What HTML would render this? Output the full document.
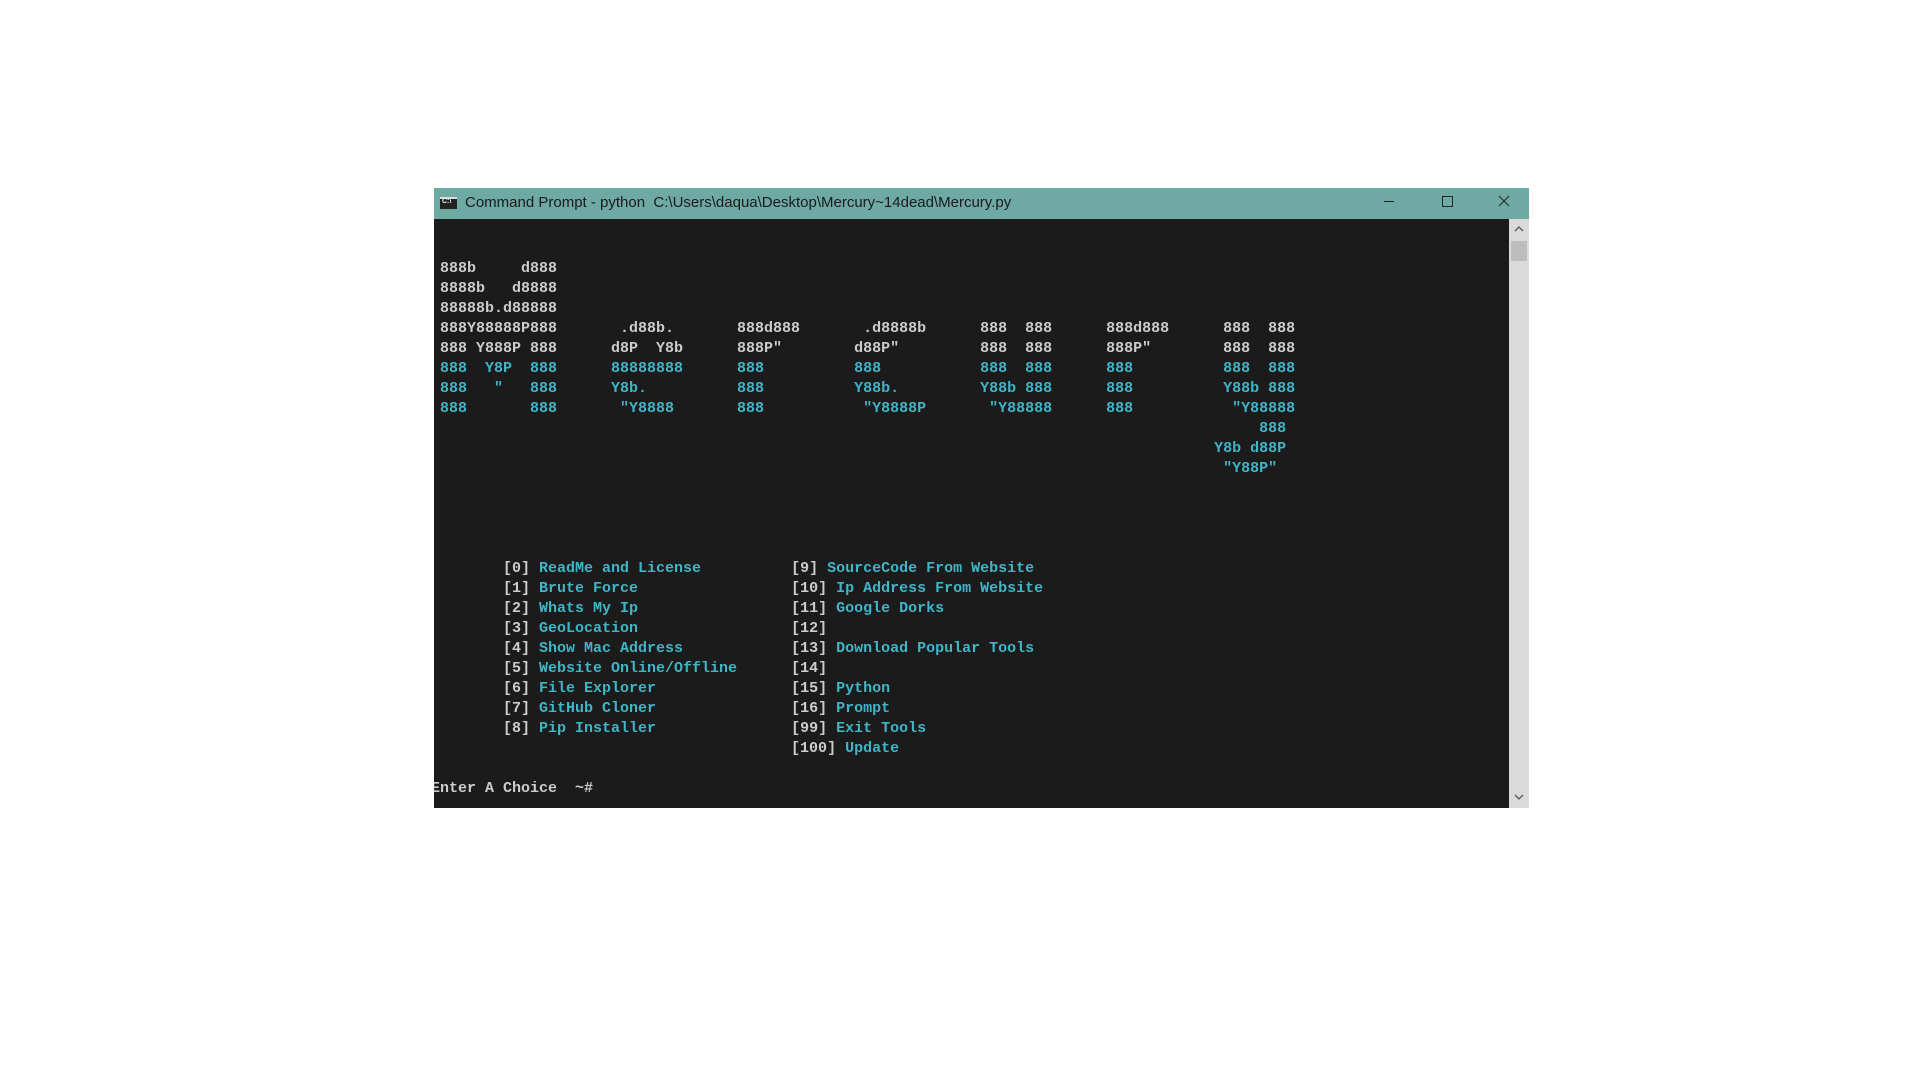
<!DOCTYPE html>
<html><head><meta charset="utf-8"><style>
body{margin:0;width:1920px;height:1080px;background:#fff;position:relative;overflow:hidden}
#win{position:absolute;left:434px;top:188px;width:1095px;height:620px;overflow:hidden;background:#1b1b1b}
#tb{position:absolute;left:0;top:0;width:1095px;height:31px;background:#6fa9a4;font:15px "Liberation Sans",sans-serif;color:#1a1a1a}
#tb .t{position:absolute;left:31px;top:6px;white-space:pre}
#ico{position:absolute;left:6px;top:9px;width:17px;height:12px;background:#222;border-top:2px solid #ddd;box-sizing:border-box}
#ico:after{content:"C:\\";position:absolute;left:2px;top:-1px;font:bold 7px "Liberation Sans",sans-serif;color:#eee}
#sb{position:absolute;left:1075px;top:31px;width:20px;height:589px;background:#dadada}
#thumb{position:absolute;left:2px;top:22px;width:16px;height:20px;background:#bdbdbd}
pre{margin:0;position:absolute;font:bold 15px/20px "Liberation Mono",monospace;color:#cccccc;white-space:pre}
.c{color:#3fb6c8}
</style></head><body>
<div id="win">
<div id="tb"><div id="ico"></div><div class="t">Command Prompt - python  C:\Users\daqua\Desktop\Mercury~14dead\Mercury.py</div>
<svg style="position:absolute;left:945px;top:4px" width="20" height="20"><path d="M5 9.5H15" stroke="#222" stroke-width="1"/></svg>
<svg style="position:absolute;left:1003px;top:4px" width="20" height="20"><rect x="5.5" y="4.5" width="10" height="10" fill="none" stroke="#222"/></svg>
<svg style="position:absolute;left:1060px;top:4px" width="20" height="20"><path d="M5 4L15 14M15 4L5 14" stroke="#222" stroke-width="1"/></svg>
</div>
<div id="sb"><svg style="position:absolute;left:5px;top:6px" width="10" height="8"><path d="M1 6L5 2L9 6" fill="none" stroke="#555" stroke-width="1.3"/></svg><div id="thumb"></div><svg style="position:absolute;left:5px;top:574px" width="10" height="8"><path d="M1 2L5 6L9 2" fill="none" stroke="#555" stroke-width="1.3"/></svg></div>
<pre style="left:6px;top:71px">888b     d888
8888b   d8888
88888b.d88888
888Y88888P888       .d88b.       888d888       .d8888b      888  888      888d888      888  888
888 Y888P 888      d8P  Y8b      888P"        d88P"         888  888      888P"        888  888
<span class="c">888  Y8P  888      88888888      888          888           888  888      888          888  888
888   "   888      Y8b.          888          Y88b.         Y88b 888      888          Y88b 888
888       888       "Y8888       888           "Y8888P       "Y88888      888           "Y88888
                                                                                           888
                                                                                      Y8b d88P
                                                                                       "Y88P"</span></pre>
<pre style="left:6px;top:371px">       [0] <span class="c">ReadMe and License</span>          [9] <span class="c">SourceCode From Website</span>
       [1] <span class="c">Brute Force</span>                 [10] <span class="c">Ip Address From Website</span>
       [2] <span class="c">Whats My Ip</span>                 [11] <span class="c">Google Dorks</span>
       [3] <span class="c">GeoLocation</span>                 [12]
       [4] <span class="c">Show Mac Address</span>            [13] <span class="c">Download Popular Tools</span>
       [5] <span class="c">Website Online/Offline</span>      [14]
       [6] <span class="c">File Explorer</span>               [15] <span class="c">Python</span>
       [7] <span class="c">GitHub Cloner</span>               [16] <span class="c">Prompt</span>
       [8] <span class="c">Pip Installer</span>               [99] <span class="c">Exit Tools</span>
                                       [100] <span class="c">Update</span></pre>
<pre style="left:-3px;top:591px">Enter A Choice  ~#</pre>
</div>
</body></html>
